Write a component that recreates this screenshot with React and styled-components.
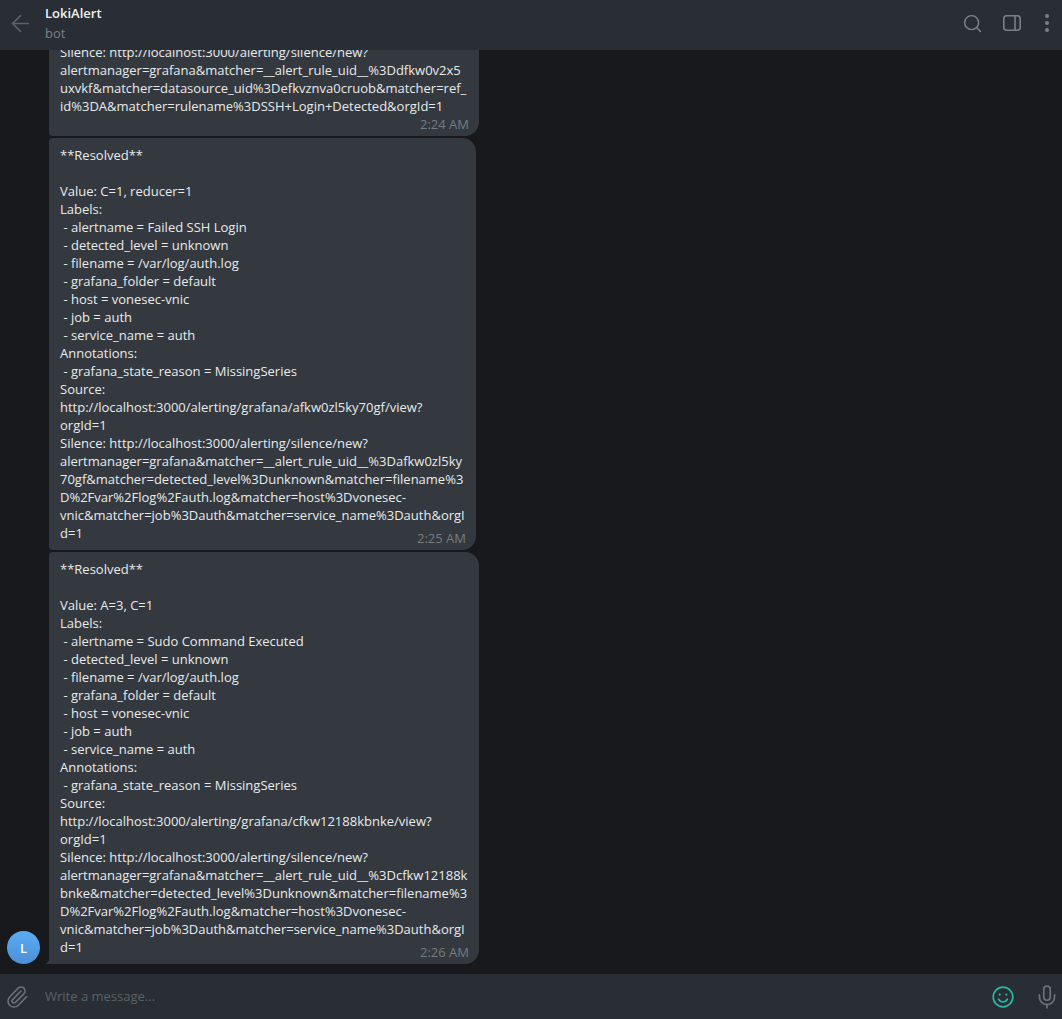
import React from 'react';
import styled, {createGlobalStyle} from "styled-components";
import {ArrowLeft, Search, Paperclip, Mic} from "lucide-react";

const GlobalStyle = createGlobalStyle`
  html, body {
    margin: 0;
    padding: 0;
    height: 100%;
    background: #17191d;
    font-family: "Open Sans", "Noto Sans", sans-serif;
  }
`

const olderMessage = [
    "Silence: http://localhost:3000/alerting/silence/new?",
    "alertmanager=grafana&matcher=__alert_rule_uid__%3Ddfkw0v2x5",
    "uxvkf&matcher=datasource_uid%3Defkvznva0cruob&matcher=ref_",
    "id%3DA&matcher=rulename%3DSSH+Login+Detected&orgId=1",
]

const failedLogin = [
    "**Resolved**",
    "",
    "Value: C=1, reducer=1",
    "Labels:",
    " - alertname = Failed SSH Login",
    " - detected_level = unknown",
    " - filename = /var/log/auth.log",
    " - grafana_folder = default",
    " - host = vonesec-vnic",
    " - job = auth",
    " - service_name = auth",
    "Annotations:",
    " - grafana_state_reason = MissingSeries",
    "Source:",
    "http://localhost:3000/alerting/grafana/afkw0zl5ky70gf/view?",
    "orgId=1",
    "Silence: http://localhost:3000/alerting/silence/new?",
    "alertmanager=grafana&matcher=__alert_rule_uid__%3Dafkw0zl5ky",
    "70gf&matcher=detected_level%3Dunknown&matcher=filename%3",
    "D%2Fvar%2Flog%2Fauth.log&matcher=host%3Dvonesec-",
    "vnic&matcher=job%3Dauth&matcher=service_name%3Dauth&orgI",
    "d=1",
]

const sudoCommand = [
    "**Resolved**",
    "",
    "Value: A=3, C=1",
    "Labels:",
    " - alertname = Sudo Command Executed",
    " - detected_level = unknown",
    " - filename = /var/log/auth.log",
    " - grafana_folder = default",
    " - host = vonesec-vnic",
    " - job = auth",
    " - service_name = auth",
    "Annotations:",
    " - grafana_state_reason = MissingSeries",
    "Source:",
    "http://localhost:3000/alerting/grafana/cfkw12188kbnke/view?",
    "orgId=1",
    "Silence: http://localhost:3000/alerting/silence/new?",
    "alertmanager=grafana&matcher=__alert_rule_uid__%3Dcfkw12188k",
    "bnke&matcher=detected_level%3Dunknown&matcher=filename%3",
    "D%2Fvar%2Flog%2Fauth.log&matcher=host%3Dvonesec-",
    "vnic&matcher=job%3Dauth&matcher=service_name%3Dauth&orgI",
    "d=1",
]

const messages = [
    {id: 1, lines: olderMessage, time: "2:24 AM", width: 430, timeInline: false},
    {id: 2, lines: failedLogin, time: "2:25 AM", width: 427, timeInline: true},
    {id: 3, lines: sudoCommand, time: "2:26 AM", width: 430, timeInline: true, last: true},
]

const App = () => {
    return (<Page>
        <GlobalStyle/>
        <Header>
            <BackButton>
                <ArrowLeft size={27} strokeWidth={1.5} color="#5c6167"/>
            </BackButton>
            <Peer>
                <PeerName>LokiAlert</PeerName>
                <PeerStatus>bot</PeerStatus>
            </Peer>
            <HeaderActions>
                <Search size={21} strokeWidth={1.7} color="#7c8085"/>
                <svg width="18" height="16" viewBox="0 0 18 16" fill="none" stroke="#7c8085" strokeWidth="1.6">
                    <rect x="0.8" y="0.8" width="16.4" height="14.4" rx="3"/>
                    <path d="M12 1v14"/>
                </svg>
                <Dots><span/><span/><span/></Dots>
            </HeaderActions>
        </Header>
        <History>
            {messages.map((item) => {
                return <Row key={item.id}>
                    {item.last ? <Avatar>L</Avatar> : null}
                    <Bubble $width={item.width} $last={item.last}>
                        <Text>
                            {item.lines.map((line, i) => {
                                return <Line key={i}>{line}</Line>
                            })}
                        </Text>
                        <Time $inline={item.timeInline}>{item.time}</Time>
                    </Bubble>
                </Row>
            })}
        </History>
        <Composer>
            <Paperclip size={24} strokeWidth={1.6} color="#6d7176"/>
            <Placeholder>Write a message...</Placeholder>
            <svg width="22" height="22" viewBox="0 0 22 22" fill="none" stroke="#2bb6a3" strokeWidth="1.7" strokeLinecap="round">
                <circle cx="11" cy="11" r="9.8"/>
                <path d="M6.6 13.2c1 1.9 2.6 2.8 4.4 2.8s3.4-.9 4.4-2.8"/>
                <circle cx="7.7" cy="8.6" r="1.1" fill="#2bb6a3" stroke="none"/>
                <circle cx="14.3" cy="8.6" r="1.1" fill="#2bb6a3" stroke="none"/>
            </svg>
            <MicSlot>
                <Mic size={26} strokeWidth={1.6} color="#6d7176"/>
            </MicSlot>
        </Composer>
    </Page>);
};

const Page = styled.div`
  display: flex;
  flex-direction: column;
  height: 100vh;
  overflow: hidden;
  background: #17191d;
  color: #e9eaeb;
`

const Header = styled.header`
  flex: none;
  display: flex;
  align-items: center;
  height: 50px;
  padding-right: 13px;
  background: #282e33;
  position: relative;
  z-index: 1;
`

const BackButton = styled.div`
  flex: none;
  display: flex;
  align-items: center;
  justify-content: center;
  width: 27px;
  margin: -4px 11px 0 7px;
`

const Peer = styled.div`
  flex: 1;
  display: flex;
  flex-direction: column;
  gap: 2px;
  margin-top: -5px;
`

const PeerName = styled.span`
  font-size: 13px;
  line-height: 18px;
  font-weight: 600;
  color: #f0f1f2;
`

const PeerStatus = styled.span`
  font-size: 13px;
  line-height: 18px;
  color: #7c8085;
`

const HeaderActions = styled.div`
  display: flex;
  align-items: center;
  gap: 20px;
  margin-top: -4px;
`

const Dots = styled.div`
  display: flex;
  flex-direction: column;
  gap: 3px;
  margin-left: 4px;

  span {
    width: 4px;
    height: 4px;
    border-radius: 50%;
    background: #7c8085;
  }
`

const History = styled.main`
  flex: 1;
  min-height: 0;
  overflow: hidden;
  display: flex;
  flex-direction: column;
  justify-content: flex-end;
  gap: 2px;
  padding: 0 0 10px 49px;
`

const Row = styled.div`
  flex: none;
  position: relative;
`

const Avatar = styled.div`
  position: absolute;
  left: -42px;
  bottom: 0;
  width: 33px;
  height: 33px;
  display: flex;
  align-items: center;
  justify-content: center;
  border-radius: 50%;
  background: linear-gradient(180deg, #5cacf2, #4a90d9);
  color: #fff;
  font-size: 13px;
  font-weight: 600;
`

const Bubble = styled.div`
  position: relative;
  display: flex;
  flex-direction: column;
  box-sizing: border-box;
  width: ${(props) => props.$width}px;
  padding: 8px 10px 3px 11px;
  background: #33393f;
  border-radius: 4px 14px 14px 4px;

  ${(props) => props.$last && `
    border-bottom-left-radius: 0;

    &::before {
      content: "";
      position: absolute;
      left: -6px;
      bottom: 0;
      width: 6px;
      height: 6px;
      background: radial-gradient(circle at 0 0, transparent 6px, #33393f 6.5px);
    }
  `}
`

const Text = styled.div`
  font-size: 13px;
  line-height: 18px;
  color: #e9eaeb;
`

const Line = styled.div`
  white-space: pre;
  min-height: 18px;
`

const Time = styled.span`
  align-self: flex-end;
  font-size: 13px;
  line-height: 18px;
  color: #767c82;
  margin-top: ${(props) => props.$inline ? "-13px" : "0"};
`

const Composer = styled.footer`
  flex: none;
  display: flex;
  align-items: center;
  height: 45px;
  padding: 0 2px 0 5px;
  background: #282e33;
`

const Placeholder = styled.span`
  flex: 1;
  margin: -2px 0 0 16px;
  font-size: 13px;
  color: #5c6167;
`

const MicSlot = styled.div`
  display: flex;
  margin-left: 20px;
`

export default App;
